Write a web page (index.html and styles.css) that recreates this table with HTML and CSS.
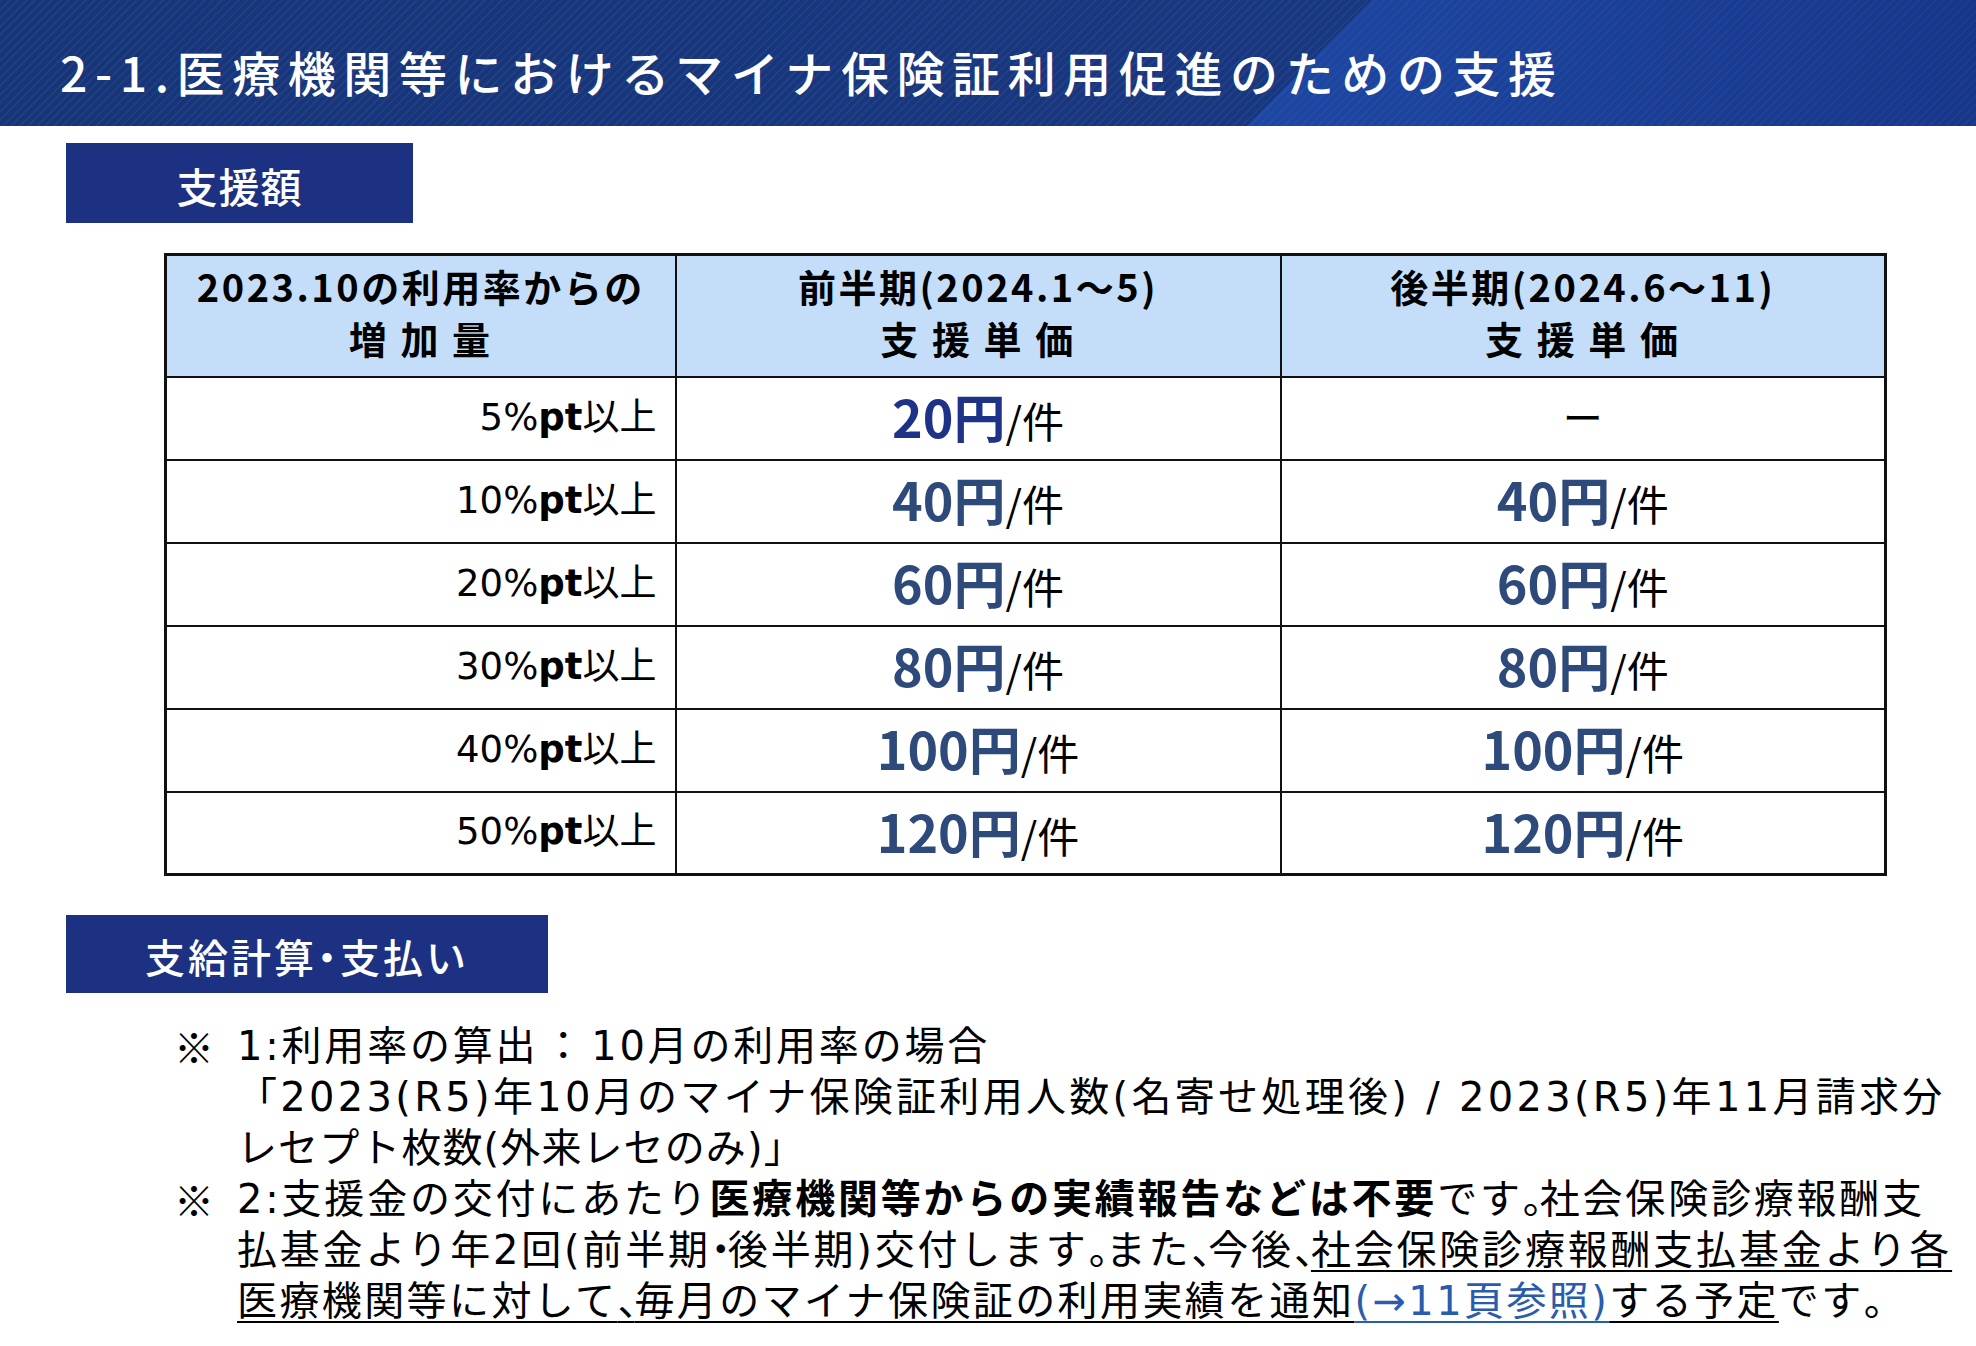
FILE: index.html
```html
<!DOCTYPE html>
<html lang="ja">
<head>
<meta charset="utf-8">
<title>2-1.医療機関等におけるマイナ保険証利用促進のための支援</title>
<link rel="stylesheet" href="styles.css">
</head>
<body>
<header class="title-bar">
  <h1 class="title">2-1.医療機関等におけるマイナ保険証利用促進のための支援</h1>
</header>
<main class="content">
  <div class="label label-amount">支援額</div>

  <table class="rates">
    <colgroup>
      <col class="col-rate">
      <col class="col-price">
      <col class="col-price">
    </colgroup>
    <thead>
      <tr>
        <th><span class="th-num">2023.10</span>の利用率からの<br>増 加 量</th>
        <th>前半期(2024.1～5)<br>支 援 単 価</th>
        <th>後半期(2024.6～11)<br>支 援 単 価</th>
      </tr>
    </thead>
    <tbody>
      <tr>
        <td class="rate">5%<b>pt</b>以上</td>
        <td class="price"><span class="amt amt-first">20円</span><span class="unit">/件</span></td>
        <td class="price"><span class="dash">ー</span></td>
      </tr>
      <tr>
        <td class="rate">10%<b>pt</b>以上</td>
        <td class="price"><span class="amt">40円</span><span class="unit">/件</span></td>
        <td class="price"><span class="amt">40円</span><span class="unit">/件</span></td>
      </tr>
      <tr>
        <td class="rate">20%<b>pt</b>以上</td>
        <td class="price"><span class="amt">60円</span><span class="unit">/件</span></td>
        <td class="price"><span class="amt">60円</span><span class="unit">/件</span></td>
      </tr>
      <tr>
        <td class="rate">30%<b>pt</b>以上</td>
        <td class="price"><span class="amt">80円</span><span class="unit">/件</span></td>
        <td class="price"><span class="amt">80円</span><span class="unit">/件</span></td>
      </tr>
      <tr>
        <td class="rate">40%<b>pt</b>以上</td>
        <td class="price"><span class="amt">100円</span><span class="unit">/件</span></td>
        <td class="price"><span class="amt">100円</span><span class="unit">/件</span></td>
      </tr>
      <tr>
        <td class="rate">50%<b>pt</b>以上</td>
        <td class="price"><span class="amt">120円</span><span class="unit">/件</span></td>
        <td class="price"><span class="amt">120円</span><span class="unit">/件</span></td>
      </tr>
    </tbody>
  </table>

  <div class="label label-calc">支給計算<span class="p">・</span>支払い</div>

  <div class="notes">
    <div class="note">
      <span class="mark">※</span>
      <p class="note-text"><span class="ln">1:利用率の算出<span class="colon">：</span>10月の利用率の場合</span><br><span class="ln ln-wide">「2023(R5)年10月のマイナ保険証利用人数(名寄せ処理後) / 2023(R5)年11月請求分</span><br><span class="ln ln-short">レセプト枚数(外来レセのみ)<span class="p">」</span></span></p>
    </div>
    <div class="note">
      <span class="mark">※</span>
      <p class="note-text"><span class="ln">2:支援金の交付にあたり<strong>医療機関等からの実績報告などは不要</strong>です<span class="p">。</span>社会保険診療報酬支</span><br><span class="ln">払基金より年2回(前半期<span class="p">・</span>後半期)交付します<span class="p">。</span>また<span class="p">、</span>今後<span class="p">、</span><u>社会保険診療報酬支払基金より各</u></span><br><span class="ln ln-tight"><u>医療機関等に対して<span class="p">、</span>毎月のマイナ保険証の利用実績を通知</u><u class="ref">(→11頁参照)</u><u>する予定</u>です<span class="p">。</span></span></p>
    </div>
  </div>
</main>
</body>
</html>
```

FILE: styles.css
```css
* { box-sizing: border-box; }

html, body {
  margin: 0;
  padding: 0;
  background: #ffffff;
}

body {
  width: 1976px;
  height: 1346px;
  overflow: hidden;
  font-family: "Noto Sans CJK JP", "Noto Sans", sans-serif;
  color: #000;
}

/* ---------- title bar ---------- */
.title-bar {
  position: relative;
  height: 126px;
  display: flex;
  align-items: center;
  padding: 16px 0 0 60px;
  overflow: hidden;
  background:
    repeating-linear-gradient(135deg, rgba(255,255,255,0.045) 0 2px, rgba(255,255,255,0) 2px 6px),
    linear-gradient(90deg, #163579 0%, #183883 100%);
}

.title-bar::after {
  content: "";
  position: absolute;
  inset: 0;
  background:
    repeating-linear-gradient(135deg, rgba(255,255,255,0.03) 0 2px, rgba(255,255,255,0) 2px 6px),
    linear-gradient(90deg, #1d47a4 1250px, #1a3f96 1600px, #16368a 1976px);
  clip-path: polygon(1372px 0, 100% 0, 100% 100%, 1247px 100%);
}

.title {
  position: relative;
  z-index: 1;
  margin: 0;
  color: #fff;
  font-size: 48px;
  font-weight: 500;
  letter-spacing: 7.6px;
  line-height: 1;
  white-space: nowrap;
}

/* ---------- section labels ---------- */
.content {
  display: flex;
  flex-direction: column;
  align-items: flex-start;
}

.label {
  display: flex;
  align-items: center;
  justify-content: center;
  margin-left: 66px;
  background: #1d3182;
  color: #fff;
  font-weight: 500;
  white-space: nowrap;
}

.label-amount {
  margin-top: 17px;
  width: 347px;
  height: 80px;
  font-size: 41px;
  letter-spacing: 1px;
  padding-top: 4px;
}

.label-calc {
  margin-top: 39px;
  width: 482px;
  height: 78px;
  font-size: 40px;
  letter-spacing: 3px;
  padding-top: 4px;
}

.p {
  font-feature-settings: "halt" 1;
}

/* ---------- table ---------- */
.rates {
  margin: 30px 0 0 164px;
  border-collapse: collapse;
  table-layout: fixed;
  width: 1720px;
  border: 3px solid #111;
}

.col-rate { width: 510px; }
.col-price { width: 605px; }

.rates th {
  height: 122px;
  background: #c4defa;
  border: 2px solid #111;
  font-size: 38px;
  font-weight: 700;
  line-height: 52px;
  letter-spacing: 2.5px;
  text-align: center;
  vertical-align: middle;
  padding: 0 0 8px;
  white-space: nowrap;
}

.th-num {
  font-weight: 700;
}

.rates td {
  height: 83px;
  border: 2px solid #111;
  vertical-align: middle;
  padding: 0 0 4px;
  line-height: 1;
  white-space: nowrap;
}

.rate {
  text-align: right;
  padding-right: 18px !important;
  padding-top: 2px !important;
  font-family: "DejaVu Sans", "Noto Sans CJK JP", sans-serif;
  font-size: 37px;
  font-weight: 400;
  letter-spacing: 0;
}

.rate b {
  font-weight: 700;
}

.price {
  text-align: center;
}

.amt {
  font-size: 52px;
  font-weight: 700;
  color: #2e4a7b;
  letter-spacing: 0;
}

.amt-first {
  color: #1e3388;
}

.unit {
  font-size: 42px;
  font-weight: 400;
  color: #000;
}

.dash {
  font-size: 40px;
  font-weight: 400;
}

/* ---------- notes ---------- */
.notes {
  margin: 28px 0 0 174px;
  display: flex;
  flex-direction: column;
}

.note {
  display: grid;
  grid-template-columns: 63px auto;
  align-items: start;
}

.mark {
  font-size: 40px;
  line-height: 51px;
}

.note-text {
  margin: 0;
  font-family: "DejaVu Sans", "Noto Sans CJK JP", sans-serif;
  font-size: 40px;
  line-height: 51px;
  white-space: nowrap;
  letter-spacing: 2.8px;
}

.note-text .ln-wide {
  letter-spacing: 3.3px;
}

.note-text .ln-short {
  letter-spacing: 1.1px;
}

.note-text .ln-tight {
  letter-spacing: 2.4px;
}

.note-text .p {
  letter-spacing: -3px;
}

.colon {
  margin: 0 5px;
}

.note-text strong {
  font-weight: 700;
}

.note-text u {
  text-decoration: underline;
  text-decoration-thickness: 2px;
  text-underline-offset: 6px;
}

.note-text u.ref {
  color: #2a5cae;
  text-decoration-color: #2a5cae;
}
```
